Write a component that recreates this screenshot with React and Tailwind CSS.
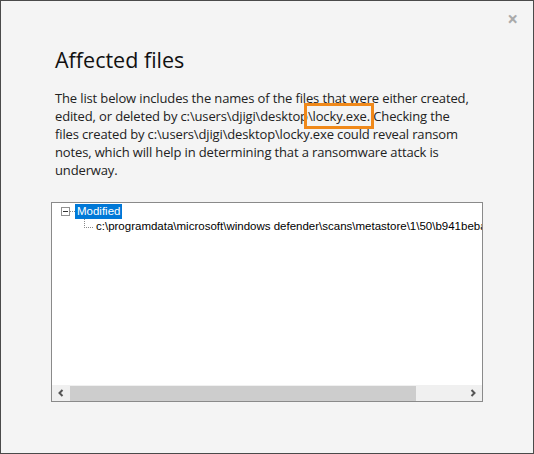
export default function App() {
  return (
    <div className="relative w-[534px] h-[454px] bg-[#f4f4f4] border border-[#4a4a4a] overflow-hidden" style={{ fontFamily: "'Open Sans', sans-serif" }}>
      <button className="absolute right-[15px] top-[9px] text-[#aaa] text-[19px] leading-none font-bold">×</button>

      <div className="pl-[54px] pr-[40px] pt-[44px]">
        <h1 className="text-[21.5px] leading-[30px] text-[#111]">Affected files</h1>
        <p className="mt-[14px] text-[13px] leading-[18px] text-[#222] w-[416px] tracking-[-0.14px]">
          The list below includes the names of the files that were either created, edited, or deleted by c:\users\djigi\desktop
          <span className="outline-[3px] outline-solid outline-[#f0891a] outline-offset-[1px]">\locky.exe.</span> Checking the files created by c:\users\djigi\desktop\locky.exe could reveal ransom notes, which will help in determining that a ransomware attack is underway.
        </p>
      </div>

      <div className="ml-[50px] mt-[23px] w-[432px] h-[200px] bg-white border border-[#8a8a8a] flex flex-col" style={{ fontFamily: "'Liberation Sans', sans-serif" }}>
        <div className="flex-1 overflow-hidden relative text-[11.5px] text-black">
          <div className="flex items-center pl-[9px] pt-[1px]">
            <span className="shrink-0 w-[9px] h-[9px] border border-[#919191] bg-white flex items-center justify-center">
              <span className="w-[5px] h-px bg-[#333]"></span>
            </span>
            <span className="shrink-0 w-[5px] border-t border-dotted border-[#888]"></span>
            <span className="bg-[#0078d7] text-white px-[2px] leading-[15px]">Modified</span>
          </div>
          <div className="flex items-start pl-[32px]">
            <span className="shrink-0 w-[9px] h-[9px] border-l border-b border-dotted border-[#888]"></span>
            <span className="pl-[3px] leading-[15px] whitespace-nowrap">c:\programdata\microsoft\windows defender\scans\metastore\1\50\b941beba87c2d4f8</span>
          </div>
        </div>
        <div className="h-[16px] bg-[#f0f0f0] flex items-center">
          <span className="w-[18px] flex justify-center">
            <svg width="8" height="8" viewBox="0 0 8 8"><path d="M5.5 1 L2.5 4 L5.5 7" stroke="#555" strokeWidth="2" fill="none" /></svg>
          </span>
          <span className="h-[15px] w-[346px] bg-[#cdcdcd]"></span>
          <span className="flex-1"></span>
          <span className="w-[18px] flex justify-center">
            <svg width="8" height="8" viewBox="0 0 8 8"><path d="M2.5 1 L5.5 4 L2.5 7" stroke="#555" strokeWidth="2" fill="none" /></svg>
          </span>
        </div>
      </div>
    </div>
  );
}
